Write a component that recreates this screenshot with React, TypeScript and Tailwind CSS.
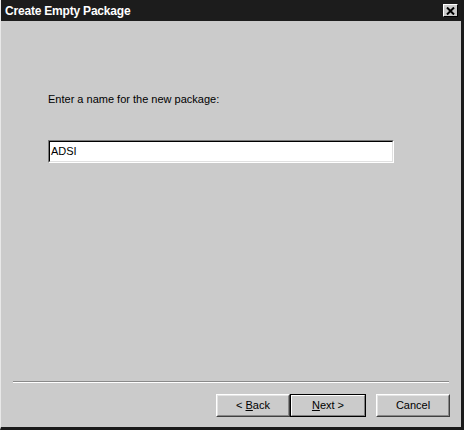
const Btn = ({ children, primary }: { children: React.ReactNode; primary?: boolean }) => {
  return (
    <button
      className={
        primary
          ? "w-[76px] h-[23px] border border-black bg-[#cbcbcb] text-[11px] text-black"
          : "w-[74px] h-[23px] border border-t-white border-l-white border-r-[#404040] border-b-[#404040] bg-[#cbcbcb] text-[11px] text-black"
      }
    >
      <span
        className={
          primary
            ? "flex h-full w-full items-center justify-center border border-t-white border-l-white border-r-[#808080] border-b-[#808080]"
            : "flex h-full w-full items-center justify-center border border-t-[#e4e4e4] border-l-[#e4e4e4] border-r-[#888888] border-b-[#888888]"
        }
      >
        {children}
      </span>
    </button>
  );
};

const App = () => {
  return (
    <div
      className="w-[464px] h-[430px] bg-[#cbcbcb] flex flex-col border-l border-l-[#e8e8e8] border-r-[3px] border-r-[#1a1a1a] border-b-[3px] border-b-[#1a1a1a]"
      style={{ fontFamily: '"Liberation Sans", Arial, sans-serif' }}
    >
      <div className="h-[21px] bg-[#1c1c1c] flex items-center justify-between pl-[4px] pr-[3px]">
        <span className="text-white font-bold text-[12px] tracking-[-0.2px]">Create Empty Package</span>
        <div className="w-[15px] h-[13px] bg-[#cbcbcb] border border-t-white border-l-white border-r-black border-b-black flex items-center justify-center">
          <svg width="9" height="8" viewBox="0 0 9 8">
            <path d="M1 0.5 L8 7.5 M8 0.5 L1 7.5" stroke="black" strokeWidth="2" />
          </svg>
        </div>
      </div>
      <div className="flex-1 flex flex-col">
        <div className="pl-[47px] pt-[71px] text-[11px] text-black leading-[14px]">
          Enter a name for the new package:
        </div>
        <div className="ml-[47px] mt-[34px] w-[346px] h-[23px] border border-t-[#7a7a7a] border-l-[#7a7a7a] border-r-white border-b-white">
          <div className="h-full w-full border border-t-black border-l-black border-r-[#e0e0e0] border-b-[#e0e0e0] bg-white flex items-center text-[11px] text-black pl-[1px]">
            ADSI
          </div>
        </div>
        <div className="flex-1" />
        <div className="mx-[12px] border-t border-t-[#8a8a8a] border-b border-b-white" />
        <div className="flex justify-end pr-[11px] pt-[11px] pb-[10px]">
          <Btn>
            <span>
              &lt; <u>B</u>ack
            </span>
          </Btn>
          <Btn primary>
            <span>
              <u>N</u>ext &gt;
            </span>
          </Btn>
          <div className="w-[10px]" />
          <Btn>Cancel</Btn>
        </div>
      </div>
    </div>
  );
};

export default App;
